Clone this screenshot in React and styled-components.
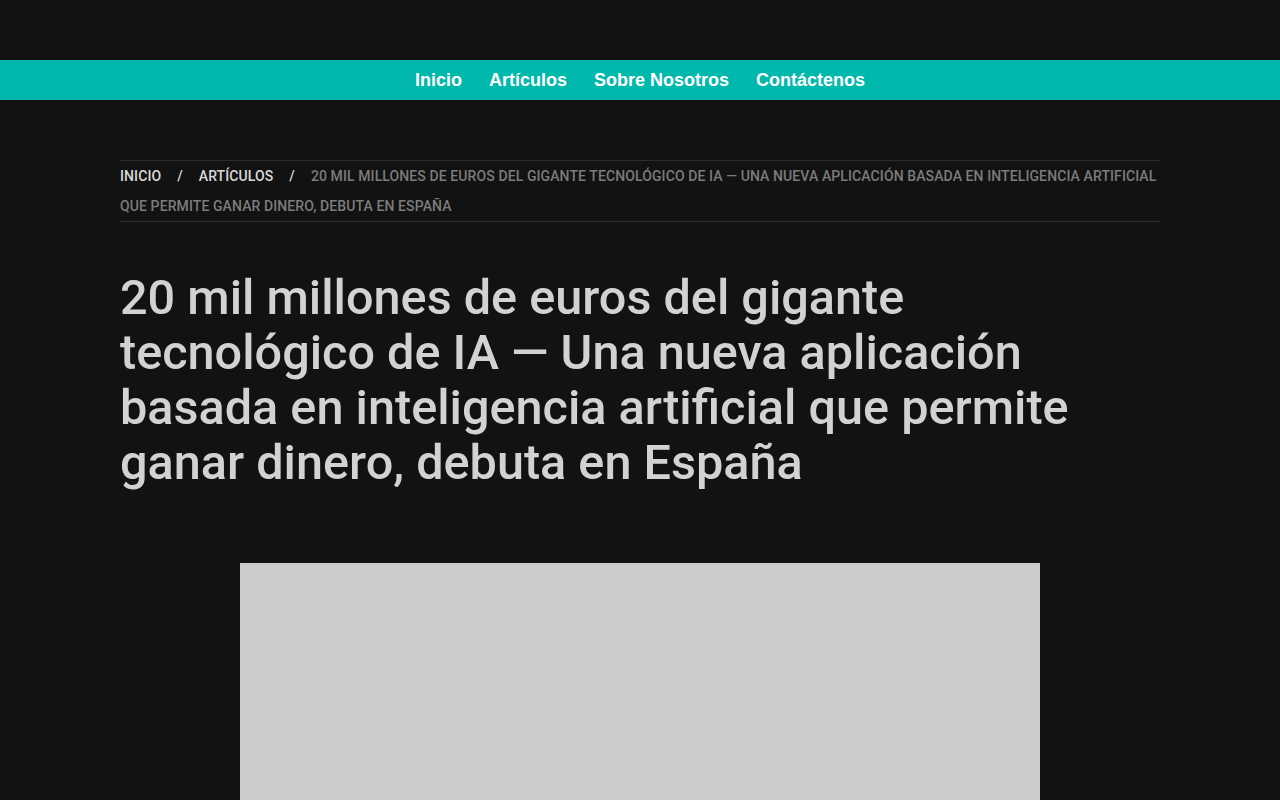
import React from "react";
import styled, { createGlobalStyle } from "styled-components";

const Global = createGlobalStyle`
  html, body { margin: 0; padding: 0; background: #121212; }
  body { font-family: Roboto, "Liberation Sans", sans-serif; }
  * { box-sizing: border-box; }
`;

const Page = styled.div`
  min-height: 800px;
  background: #121212;
  display: flex;
  flex-direction: column;
`;

const TopBar = styled.header`
  height: 60px;
  background: #121212;
`;

const Nav = styled.nav`
  height: 40px;
  background: #00b8ab;
  display: flex;
  justify-content: center;
  align-items: center;
  gap: 27px;
`;

const NavLink = styled.a`
  font-family: "Liberation Sans", Arial, sans-serif;
  font-weight: 700;
  font-size: 18px;
  color: #ffffff;
  text-decoration: none;
`;

const Container = styled.main`
  width: 1040px;
  margin: 60px auto 0;
`;

const Breadcrumb = styled.div`
  border-top: 1px solid #2c2c2c;
  border-bottom: 1px solid #2c2c2c;
  padding: 0;
  font-family: Roboto, sans-serif;
  font-size: 14px;
  font-weight: 500;
  line-height: 30px;
  text-transform: uppercase;
  letter-spacing: 0.1px;
`;

const Crumb = styled.a`
  color: ${(p) => (p.$current ? "#7c7c7c" : "#dadada")};
  text-decoration: none;
`;

const Sep = styled.span`
  color: #dadada;
  margin: 0 16px 0 16px;
`;

const Title = styled.h1`
  margin: 48px 0 0;
  font-family: Roboto, sans-serif;
  font-weight: 500;
  font-size: 48.6px;
  line-height: 55px;
  color: #d2d2d2;
  letter-spacing: 0;
`;

const Figure = styled.div`
  width: 800px;
  height: 300px;
  margin: 73px auto 0;
  background: #cccccc;
`;

export default function App() {
  return (
    <Page>
      <Global />
      <TopBar />
      <Nav>
        <NavLink href="#">Inicio</NavLink>
        <NavLink href="#">Artículos</NavLink>
        <NavLink href="#">Sobre Nosotros</NavLink>
        <NavLink href="#">Contáctenos</NavLink>
      </Nav>
      <Container>
        <Breadcrumb>
          <Crumb href="#">Inicio</Crumb>
          <Sep>/</Sep>
          <Crumb href="#">Artículos</Crumb>
          <Sep>/</Sep>
          <Crumb $current>
            20 mil millones de euros del gigante tecnológico de IA — Una nueva aplicación basada en inteligencia artificial que permite ganar dinero, debuta en España
          </Crumb>
        </Breadcrumb>
        <Title>
          20 mil millones de euros del gigante tecnológico de IA — Una nueva aplicación basada en inteligencia artificial que permite ganar dinero, debuta en España
        </Title>
        <Figure />
      </Container>
    </Page>
  );
}
